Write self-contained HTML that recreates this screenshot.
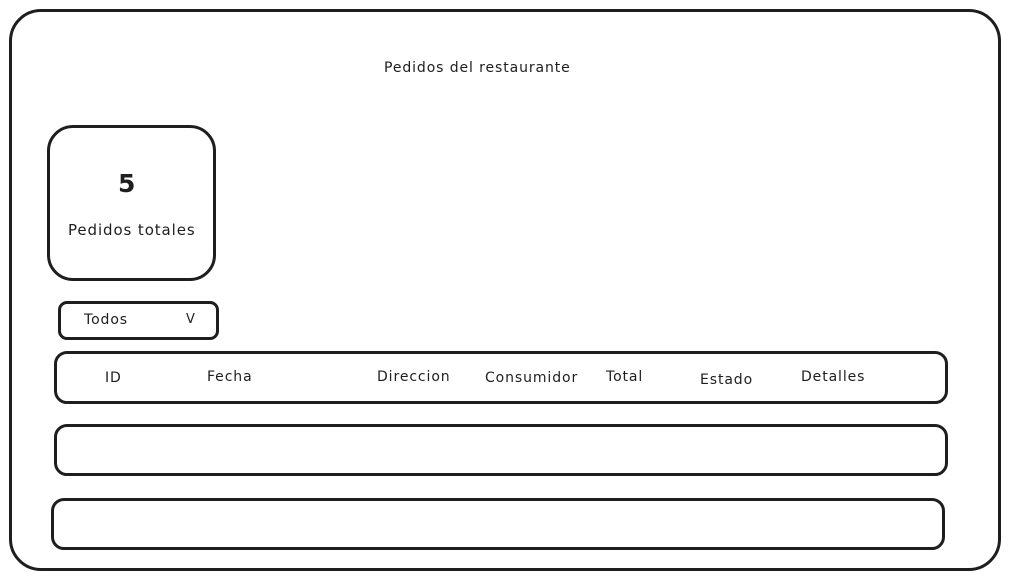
<!DOCTYPE html>
<html><head><meta charset="utf-8"><style>
html,body{margin:0;padding:0;background:#fff;width:1009px;height:578px;overflow:hidden}
.b{position:absolute;border:3px solid #1e1e1e;box-sizing:border-box;background:transparent}
.t{position:absolute;font-family:"DejaVu Sans","Liberation Sans",sans-serif;font-size:14px;letter-spacing:0.9px;color:#1e1e1e;white-space:nowrap;line-height:1}
</style></head><body>
<div class="b" style="left:9px;top:9px;width:992px;height:562px;border-radius:32px"></div>
<div class="t" style="left:384px;top:61px">Pedidos del restaurante</div>
<div class="b" style="left:47px;top:125px;width:169px;height:156px;border-radius:26px"></div>
<div class="t" style="left:118px;top:171px;font-size:25px;font-weight:bold">5</div>
<div class="t" style="left:68px;top:223px;font-size:15px">Pedidos totales</div>
<div class="b" style="left:58px;top:301px;width:161px;height:39px;border-radius:9px"></div>
<div class="t" style="left:84px;top:313px">Todos</div>
<div class="t" style="left:186px;top:313px;font-size:13px">V</div>
<div class="b" style="left:54px;top:351px;width:894px;height:53px;border-radius:13px"></div>
<div class="t" style="left:105px;top:371px">ID</div>
<div class="t" style="left:207px;top:370px">Fecha</div>
<div class="t" style="left:377px;top:370px">Direccion</div>
<div class="t" style="left:485px;top:371px">Consumidor</div>
<div class="t" style="left:606px;top:370px">Total</div>
<div class="t" style="left:700px;top:373px">Estado</div>
<div class="t" style="left:801px;top:370px">Detalles</div>
<div class="b" style="left:54px;top:424px;width:894px;height:52px;border-radius:13px"></div>
<div class="b" style="left:51px;top:498px;width:894px;height:52px;border-radius:13px"></div>
</body></html>
